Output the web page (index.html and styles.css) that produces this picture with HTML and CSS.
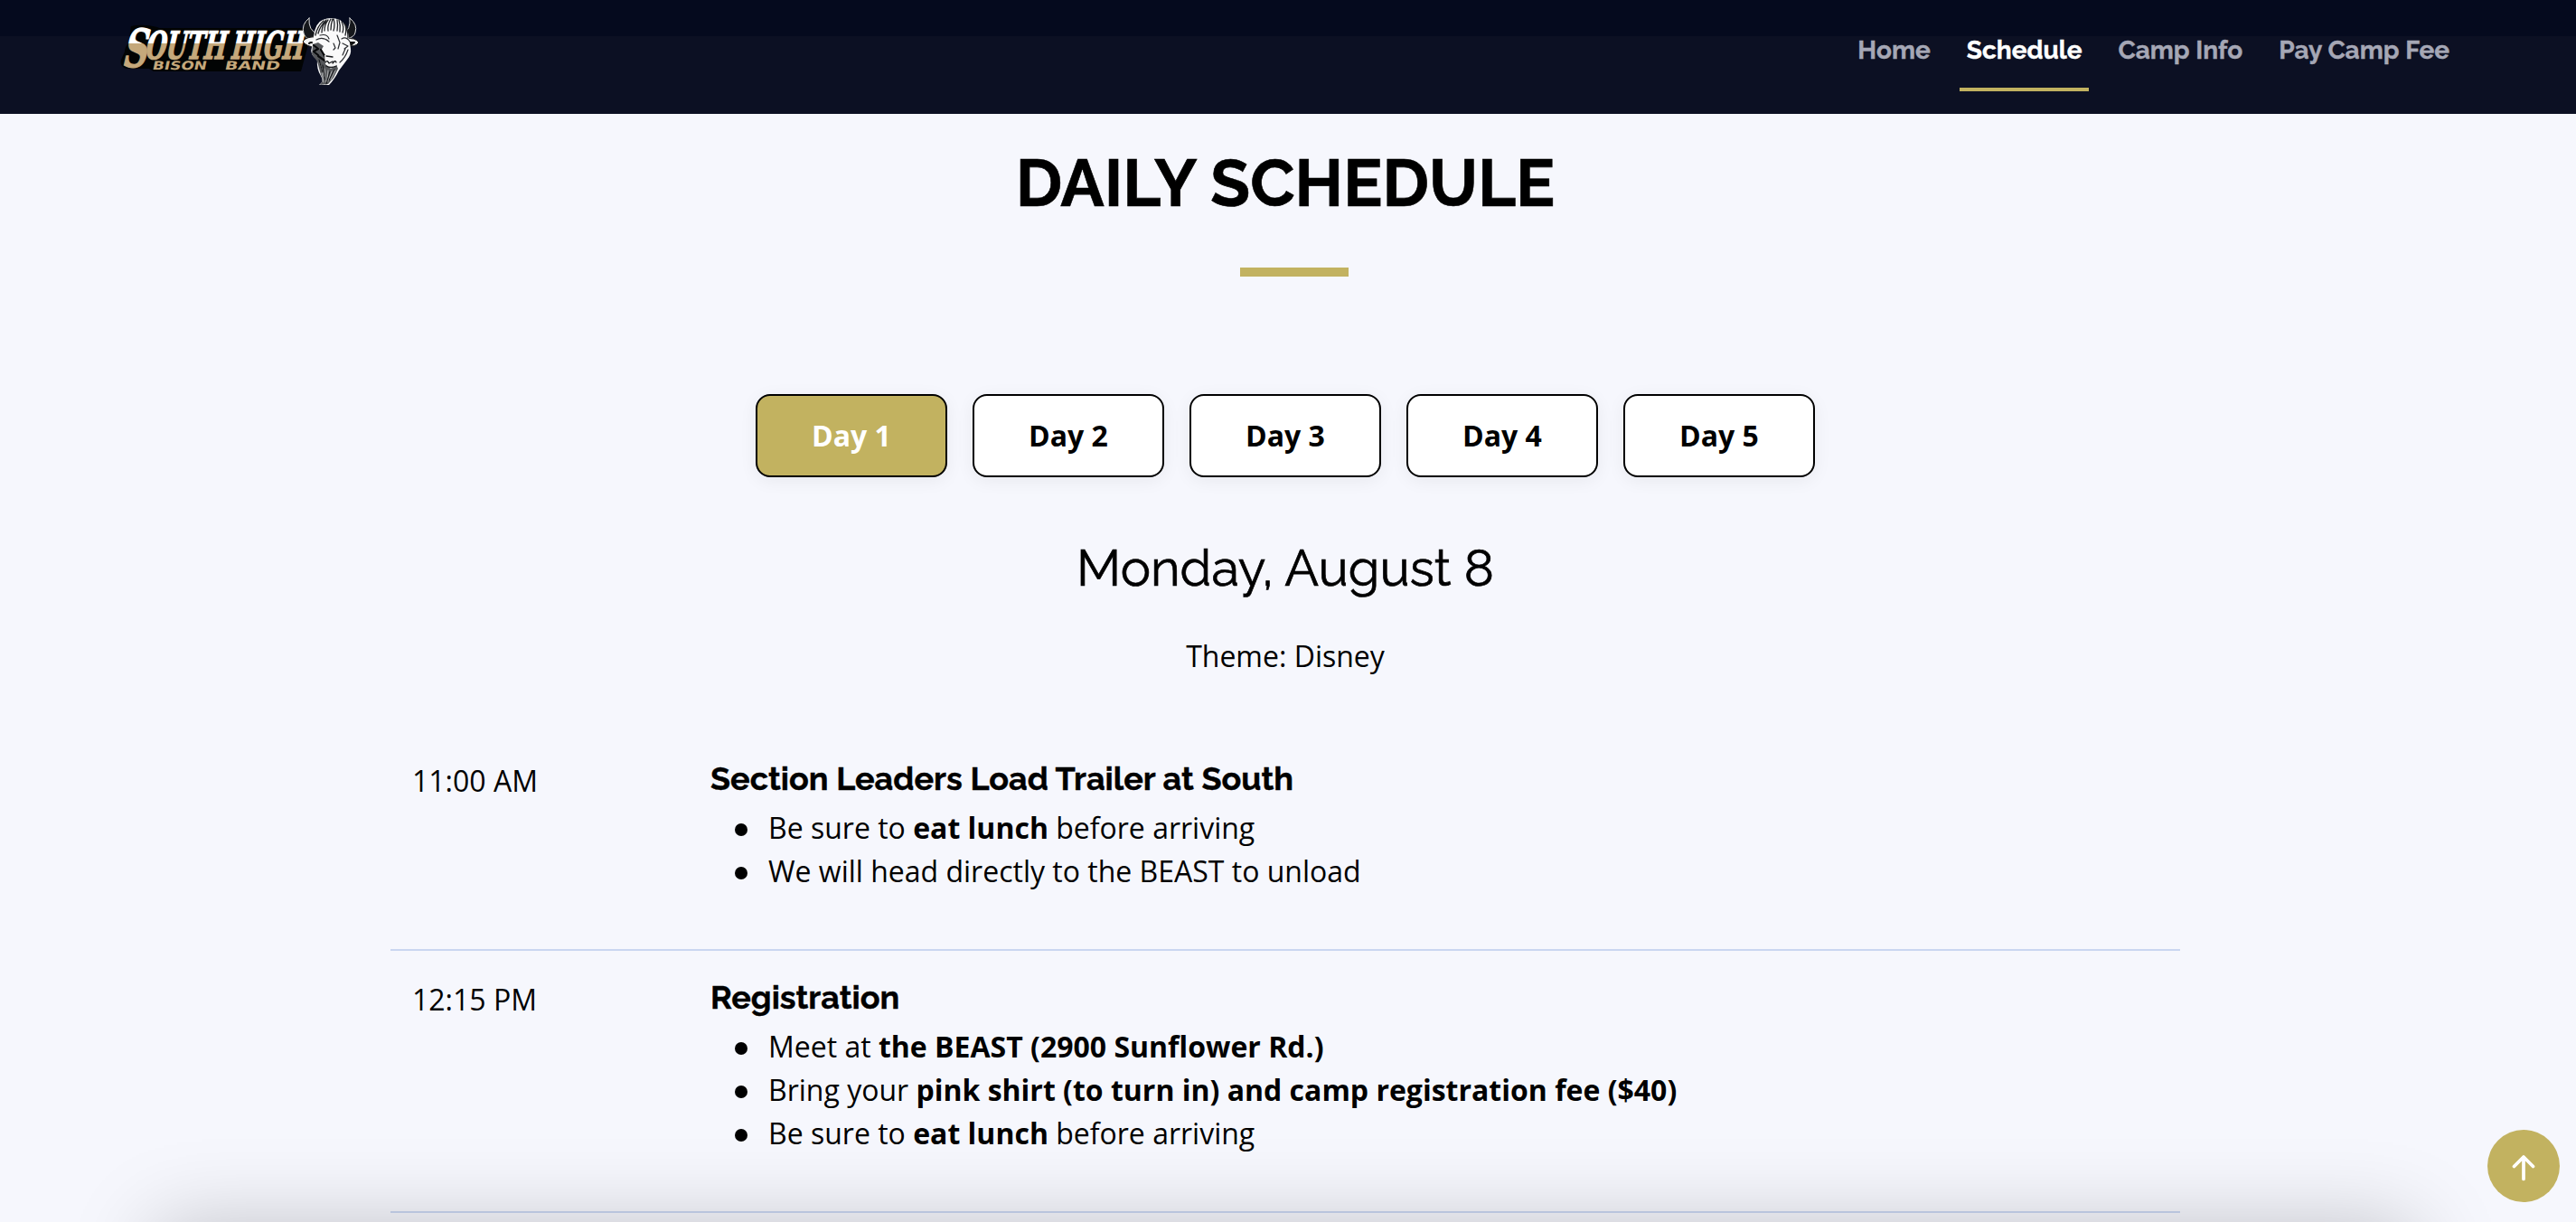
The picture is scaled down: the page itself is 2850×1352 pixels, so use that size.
FILE: index.html
```html
<!DOCTYPE html>
<html lang="en">
<head>
<meta charset="utf-8">
<title>South High Bison Band Camp</title>
<link rel="stylesheet" href="styles.css">
</head>
<body>
<header class="header">
  <svg class="logo" viewBox="130 10 275 90" role="img" aria-label="South High Bison Band">
    <defs>
      <linearGradient id="split-cap" gradientUnits="userSpaceOnUse" x1="0" y1="-50" x2="0" y2="0">
        <stop offset="0.5" stop-color="#fff"/>
        <stop offset="0.5" stop-color="#c5a87b"/>
      </linearGradient>
      <linearGradient id="split" gradientUnits="userSpaceOnUse" x1="0" y1="-32" x2="0" y2="0">
        <stop offset="0.5" stop-color="#fff"/>
        <stop offset="0.5" stop-color="#c5a87b"/>
      </linearGradient>
    </defs>
    <path d="M145 29Q158 26 174 30L176 31H346L333 79H170L165 76H140Q132 74 134 66L138 57Q138 52 142 48Z" fill="#020404"/>
    <g class="logo-name">
      <text transform="translate(134 73.500) skewX(-13)" font-size="58" textLength="27" lengthAdjust="spacingAndGlyphs" fill="url(#split-cap)" stroke="url(#split-cap)">S</text>
      <text transform="translate(159 64.500) skewX(-13)" font-size="42" textLength="89" lengthAdjust="spacingAndGlyphs" fill="url(#split)" stroke="url(#split)">OUTH</text>
      <text transform="translate(254 64.500) skewX(-13)" font-size="42" textLength="80" lengthAdjust="spacingAndGlyphs" fill="url(#split)" stroke="url(#split)">HIGH</text>
    </g>
    <g class="logo-band">
      <text transform="translate(168 76.500) skewX(-12)" textLength="60" lengthAdjust="spacingAndGlyphs">BISON</text>
      <text transform="translate(248 76.500) skewX(-12)" textLength="61" lengthAdjust="spacingAndGlyphs">BAND</text>
    </g>
    <g stroke-linecap="round" stroke-linejoin="round">
      <path d="M342 20Q333 27 336 37Q338 44 347 44L351 37Q341 34 342 20ZM387 20Q396 27 393 36Q392 41 384 43L380 37Q388 33 387 20Z" fill="#15171b" stroke="#d8d8d8" stroke-width="1"/>
      <path d="M350 41Q339 40 335 46Q340 52 348 52ZM383 43Q393 41 397 47Q393 53 383 50Z" fill="#f4f4f4" stroke="#111" stroke-width="1"/>
      <path d="M342 48Q344 46 347 48M387 47L392 47L388 50Z" stroke="#111" stroke-width="2" fill="#111"/>
      <path d="M347 40Q349 25 357 22Q366 18 376 22Q384 27 386 41L388 54Q389 60 384 66L375 78Q370 88 364 94L353 94Q359 90 355 84Q350 76 351 66Q342 60 345 52Z" fill="#fafafa"/>
      <path d="M346 49L352 47L358 51L355 56L360 61L366 63L371 69L374 76L369 86L363 93L354 94Q359 89 355 83L351 68L345 60Z" fill="#55575a"/>
      <path d="M349 39Q351 29 358 23M352 37Q354 29 361 22M356 36Q356 28 361 24M359 34Q359 27 363 22M363 34Q362 28 366 21M366 33Q366 27 368 21M369 34Q371 27 369 21M373 34Q374 28 373 22M376 35Q377 28 375 22M379 36Q381 30 378 24M382 39Q384 31 381 26M385 42Q385 33 382 27" fill="none" stroke="#202226" stroke-width="1.300"/>
      <path d="M350 44Q357 40 364 46M354 39Q362 37 364 43M378 43Q383 40 387 46M379 48L385 51L381 54M373 39L376 47L374 54M385 55Q382 64 376 69M382 54L379 61M369 48L371 53L369 55" fill="none" stroke="#292b2f" stroke-width="1.200"/>
      <path d="M347 50L352 54L347 57L352 61M355 55L361 65M352 62L362 69" stroke="#08090b" stroke-width="2.200" fill="none"/>
      <path d="M359 61L368 60L372 66L372 73L366 76L360 71Z" fill="#f6f6f6"/>
      <path d="M361 62L368 63M360 69Q362 66 364 70M368 70Q371 66 372 69M364 70L368 68M361 73Q366 76 372 73" stroke="#17191c" stroke-width="1.300" fill="none"/>
      <path d="M354 70L359 85M359 76L361 91M363 78L362 90M367 79L363 90M371 78L366 88M356 81L358 91" stroke="#c9cacc" stroke-width="0.800" fill="none"/>
      <path d="M353 66L357 80M357 72L360 88M365 79L361 93M370 77L364 89" stroke="#101215" stroke-width="1" fill="none"/>
    </g>
  </svg>
  <nav class="nav">
    <a class="nav-link">Home</a>
    <a class="nav-link active">Schedule</a>
    <a class="nav-link">Camp Info</a>
    <a class="nav-link">Pay Camp Fee</a>
  </nav>
</header>
<main class="schedule">
  <h1 class="title">DAILY SCHEDULE</h1>
  <div class="rule"></div>
  <div class="days">
    <button class="day active">Day 1</button>
    <button class="day">Day 2</button>
    <button class="day">Day 3</button>
    <button class="day">Day 4</button>
    <button class="day">Day 5</button>
  </div>
  <h2 class="date">Monday, August 8</h2>
  <p class="theme">Theme: Disney</p>
  <section class="event">
    <time class="time">11:00 AM</time>
    <div>
      <h3 class="event-title">Section Leaders Load Trailer at South</h3>
      <ul class="notes">
        <li>Be sure to <b>eat lunch</b> before arriving</li>
        <li>We will head directly to the BEAST to unload</li>
      </ul>
    </div>
  </section>
  <section class="event">
    <time class="time">12:15 PM</time>
    <div>
      <h3 class="event-title">Registration</h3>
      <ul class="notes">
        <li>Meet at <b>the BEAST (2900 Sunflower Rd.)</b></li>
        <li>Bring your <b>pink shirt (to turn in) and camp registration fee ($40)</b></li>
        <li>Be sure to <b>eat lunch</b> before arriving</li>
      </ul>
    </div>
  </section>
</main>
<div class="bottom-shade"></div>
<a class="to-top" aria-label="Back to top">
  <svg width="80" height="80" viewBox="0 0 80 80"><path d="M40 54.500V30M29.500 40.500L40 30L50.500 40.500" fill="none" stroke="#fff" stroke-width="3.700" stroke-linecap="round" stroke-linejoin="round"/></svg>
</a>
</body>
</html>
```
FILE: styles.css
```css
* { box-sizing: border-box; margin: 0; padding: 0; }

body {
  height: 1352px;
  overflow: hidden;
  background: #f6f7fd;
  color: #000;
  font: 32px/48px "Open Sans", sans-serif;
}

.header {
  display: flex;
  justify-content: space-between;
  height: 126px;
  padding: 10px 132px 0 130px;
  background: linear-gradient(#050a1e 40px, #0c1023 40px);
}

.logo { width: 275px; height: 90px; }
.logo-name text { font-family: "DejaVu Serif", serif; font-weight: 700; stroke-width: 1.4; }
.logo-band { fill: #c5a87b; font: 700 13px "DejaVu Sans", sans-serif; }

.nav {
  display: flex;
  align-items: flex-start;
  gap: 24px;
  padding-top: 29px;
}

.nav-link {
  height: 62px;
  padding: 0 8px;
  color: #a5a7b5;
  font: 700 28px/34px Raleway, sans-serif;
  -webkit-text-stroke: 0.4px;
}

.nav-link.active { color: #fff; border-bottom: 4px solid #c2b260; }

.schedule { width: 2844px; padding-top: 33px; }

.title {
  font: 700 72px/87px Raleway, sans-serif;
  text-align: center;
  -webkit-text-stroke: 0.6px;
}

.rule {
  width: 120px;
  height: 10px;
  margin: 50px 0 130px 1372px;
  background: #c2b260;
}

.days {
  display: flex;
  justify-content: center;
  gap: 28px;
}

.day {
  width: 212px;
  height: 92px;
  border: 2px solid #000;
  border-radius: 16px;
  background: #fff;
  color: #000;
  font: 700 32px/48px "Open Sans", sans-serif;
  box-shadow: 0 4px 20px rgba(0, 0, 0, 0.06);
}

.day.active { background: #c2b260; color: #fff; }

.date {
  margin-top: 66px;
  font: 400 56px/68px Raleway, sans-serif;
  text-align: center;
  -webkit-text-stroke: 0.7px;
}

.theme { margin: 40px 0 60px; text-align: center; }

.event {
  display: grid;
  grid-template-columns: 330px 1fr;
  width: 1980px;
  margin: 0 auto;
  padding: 30px 24px 62px;
  border-bottom: 2px solid #cad6f1;
}

.event-title {
  margin-bottom: 9px;
  font: 700 36px/43px Raleway, sans-serif;
  -webkit-text-stroke: 0.4px;
}

.notes { list-style: none; }

.notes li {
  display: flex;
  align-items: center;
  white-space: pre-wrap;
}

.notes li::before {
  content: "";
  width: 14px;
  height: 14px;
  margin: 4px 23px 0 27px;
  border-radius: 50%;
  background: #000;
}

.bottom-shade {
  position: absolute;
  top: 1356px;
  left: 172px;
  width: 2500px;
  height: 300px;
  box-shadow: 0 0 88px rgba(0, 0, 0, 0.22);
}

.to-top {
  position: absolute;
  left: 2752px;
  top: 1250px;
  width: 80px;
  height: 80px;
  border-radius: 50%;
  background: #c2b260;
}

.to-top svg { display: block; }
```
